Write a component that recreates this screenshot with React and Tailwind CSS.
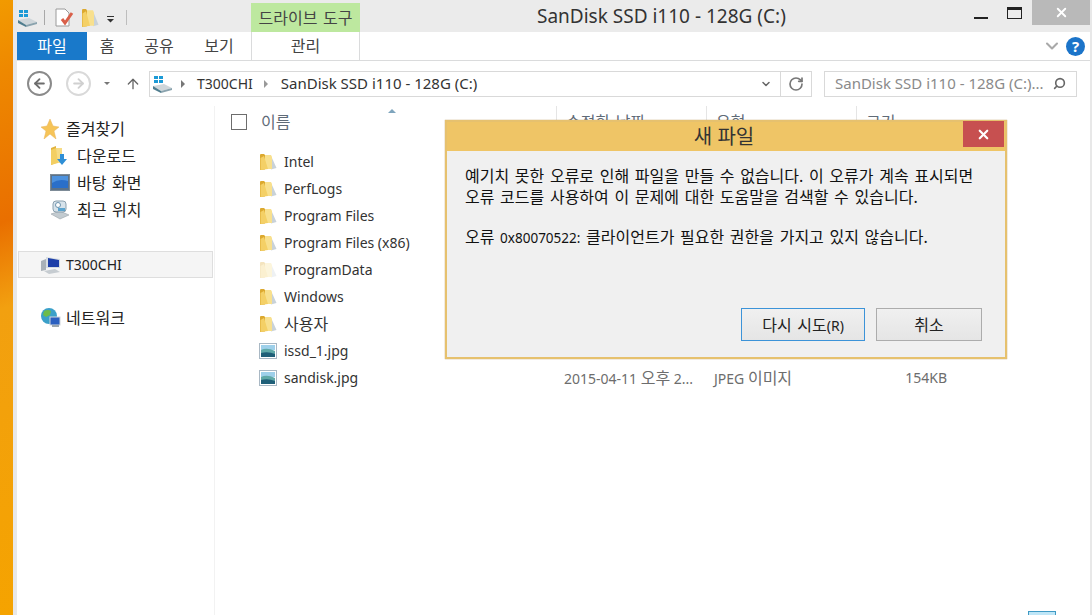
import { ArrowLeft, ArrowRight, ArrowUp, ChevronDown, RotateCw, Search, X } from 'lucide-react';

const FONT = "font-['Noto_Sans','Noto_Sans_CJK_KR',sans-serif]";
// Hangul in the reference runs wider than Latin at the same size
const KO = 'text-[16px] [word-spacing:1.5px]';

// Small hand-drawn explorer icons
function FolderIcon({ faded = false, tall = false }) {
  return (
    <svg width="18" height={tall ? 20 : 18} viewBox="0 0 18 18" preserveAspectRatio="none" className={faded ? 'opacity-30' : ''}>
      <path d="M13 5 L17.5 15 L12 16.5 Z" fill="#c9d2d8" />
      <path d="M6 2 L12 2 L13 4 L13 16 L6 16 Z" fill="#f8e08e" />
      <path d="M1 2 Q1 1 2 1 L5 1 L6 2 L6 16.5 L1 17 Z" fill="#dca92f" />
      <path d="M1.5 5 L5 3 L9 16 L1.5 17 Z" fill="#f4d066" />
    </svg>
  );
}

function ImageIcon() {
  return (
    <svg width="18" height="16" viewBox="0 0 18 16">
      <rect x="0.5" y="0.5" width="17" height="15" fill="#fff" stroke="#a9b8c4" />
      <rect x="2" y="2" width="14" height="5" fill="#9ed0ea" />
      <path d="M2 7 Q8 4 16 8 L16 14 L2 14 Z" fill="#5fa9a8" />
      <path d="M2 10 Q9 8 16 11 L16 14 L2 14 Z" fill="#1f5f78" />
    </svg>
  );
}

function DriveIcon() {
  return (
    <svg width="20" height="18" viewBox="0 0 20 18">
      <path d="M1 11 L12 9 L20 13 L9 16 Z" fill="#cfd6da" />
      <path d="M1 11 L9 16 L9 18 L1 14 Z" fill="#4f7d8e" />
      <path d="M9 16 L20 13 L20 15 L9 18 Z" fill="#8aa3ae" />
      <rect x="2" y="1" width="4" height="3" fill="#1c9ad6" />
      <rect x="7" y="1" width="4" height="3" fill="#1c9ad6" />
      <rect x="2" y="5" width="4" height="3" fill="#1c9ad6" />
      <rect x="7" y="5" width="4" height="3" fill="#1c9ad6" />
    </svg>
  );
}

function StarIcon() {
  return (
    <svg width="18" height="20" viewBox="0 0 18 20">
      <path d="M9 0 L12 7 L18 8 L13 12 L15 20 L9 15 L3 20 L5 12 L0 8 L6 7 Z" fill="#f6c458" stroke="#e6b25a" strokeWidth="0.5" />
    </svg>
  );
}

function DownloadIcon() {
  return (
    <svg width="18" height="20" viewBox="0 0 18 20">
      <path d="M1 2 L6 0 L6 17 L1 19 Z" fill="#e2b33c" />
      <path d="M6 2 L12 2 L12 17 L6 17 Z" fill="#f6dc86" />
      <path d="M1 4 L6 2 L8 17 L1 19 Z" fill="#f3cf63" />
      <path d="M10 8 L14 8 L14 13 L17 13 L12 19 L7 13 L10 13 Z" fill="#2f8fd6" />
    </svg>
  );
}

function DesktopIcon() {
  return (
    <svg width="20" height="17" viewBox="0 0 20 17">
      <rect x="0.5" y="0.5" width="19" height="16" fill="#5c7288" stroke="#7d8b97" />
      <rect x="2" y="2" width="16" height="12" fill="#2a6fc9" />
      <path d="M2 2 L18 2 L18 7 Q9 4 2 9 Z" fill="#4d92de" />
    </svg>
  );
}

function RecentIcon() {
  return (
    <svg width="20" height="20" viewBox="0 0 20 20">
      <path d="M1 14 L10 11 L19 15 L10 19 Z" fill="#c3cbd0" stroke="#8e989f" strokeWidth="0.5" />
      <rect x="3" y="1" width="13" height="11" rx="3" fill="#d6e2ea" stroke="#8ba0ae" />
      <circle cx="8" cy="5" r="2.5" fill="#fff" stroke="#6d93ad" />
      <rect x="8" y="8" width="7" height="3" fill="#5ba4cf" />
    </svg>
  );
}

function ComputerIcon() {
  return (
    <svg width="20" height="18" viewBox="0 0 20 18">
      <path d="M0 5 L5 3 L5 14 L0 15 Z" fill="#a9b1b8" />
      <path d="M5 1 L19 3 L19 12 L5 12 Z" fill="#d7dde2" />
      <path d="M7 2 L18 4 L18 11 L7 11 Z" fill="#1e3fa8" />
      <path d="M3 15 L14 13 L19 16 L8 18 Z" fill="#c6ccd1" />
    </svg>
  );
}

function NetworkIcon() {
  return (
    <svg width="20" height="20" viewBox="0 0 20 20">
      <circle cx="8" cy="8" r="8" fill="#3aa0c9" />
      <path d="M3 3 Q7 1 10 3 L9 7 L5 9 L2 7 Z" fill="#6cbb4a" />
      <path d="M9 10 L13 9 L12 14 L9 15 Z" fill="#6cbb4a" />
      <rect x="9" y="9" width="10" height="8" fill="#2a5fc0" stroke="#cfd6dc" />
      <rect x="11" y="17" width="7" height="2" fill="#9aa5ad" />
    </svg>
  );
}

function TitleIcons() {
  return (
    <div className="flex items-center pt-[3px]">
      <DriveIcon />
      <div className="ml-[7px] h-[15px] w-px bg-[#a8a8a8]" />
      <svg width="20" height="19" viewBox="0 0 20 19" className="ml-[10px]">
        <path d="M1 1 L10 1 L14 5 L14 18 L1 18 Z" fill="#fff" stroke="#9a9a9a" />
        <path d="M7 11 L10 15 L17 5" fill="none" stroke="#d9604a" strokeWidth="3" />
      </svg>
      <div className="ml-[6px]"><FolderIcon tall /></div>
      <svg width="8" height="8" viewBox="0 0 8 8" className="ml-[8px] mt-[3px]">
        <rect x="0" y="1" width="7" height="1" fill="#333" />
        <path d="M0 4 L7 4 L3.5 7.5 Z" fill="#333" />
      </svg>
      <div className="ml-[11px] h-[15px] w-px bg-[#bdbdbd]" />
    </div>
  );
}

function TitleBar() {
  return (
    <div className="flex h-[32px] bg-[#ebebeb]">
      <div className="flex w-[234px] items-center"><TitleIcons /></div>
      <div className={`mt-[3px] flex h-[29px] w-[109px] items-center justify-center bg-[#bde89f] text-[#444] ${KO}`}>
        드라이브 도구
      </div>
      <div className="w-[177px]" />
      <div className="w-[336px] pt-[3px] text-[19px] leading-[26px] whitespace-nowrap text-[#333]">
        SanDisk SSD i110 - 128G (C:)
      </div>
      <div className="flex flex-1 items-start justify-end">
        <div className="mt-[17px] mr-[19px] h-[2px] w-[14px] bg-[#222]" />
        <div className="mt-[7px] mr-[10px] h-[12px] w-[15px] border border-t-[3px] border-[#222]" />
        <div className="flex h-[25px] w-[58px] items-center justify-center bg-[#b9b9b9] text-white">
          <X size={15} strokeWidth={3} />
        </div>
      </div>
    </div>
  );
}

function RibbonTabs() {
  return (
    <div className={`flex h-[29px] items-stretch border-b border-[#dadbdc] bg-white text-[#444] ${KO}`}>
      <div className="flex w-[70px] items-center justify-center bg-[#1979ca] text-white">파일</div>
      <div className="flex w-[40px] items-center justify-center">홈</div>
      <div className="flex w-[64px] items-center justify-center">공유</div>
      <div className="flex w-[56px] items-center justify-center">보기</div>
      <div className="ml-[4px] flex w-[109px] items-center justify-center border-x border-[#dadbdc]">관리</div>
      <div className="flex flex-1 items-center justify-end pr-[5px]">
        <ChevronDown size={20} strokeWidth={2.5} className="mr-[4px] text-[#a9a9a9]" />
        <div className="flex h-[19px] w-[19px] items-center justify-center rounded-full bg-[#1b74c9] text-[15px] leading-none font-bold text-white">?</div>
      </div>
    </div>
  );
}

function AddressBar() {
  return (
    <div className="flex h-[45px] items-center text-[14px]">
      <div className="ml-[10px] flex h-[25px] w-[25px] items-center justify-center rounded-full border-2 border-[#8a8a8a] text-[#6d6d6d]">
        <ArrowLeft size={15} strokeWidth={3} />
      </div>
      <div className="ml-[14px] flex h-[25px] w-[25px] items-center justify-center rounded-full border-2 border-[#d9d9d9] text-[#d0d0d0]">
        <ArrowRight size={15} strokeWidth={3} />
      </div>
      <div className="ml-[13px] h-0 w-0 border-x-[3px] border-t-[3px] border-x-transparent border-t-[#777]" />
      <ArrowUp size={16} strokeWidth={2} className="ml-[15px] text-[#666]" />
      <div className="ml-[8px] flex h-[26px] w-[663px] items-center border border-[#d9d9d9] pl-[2px]">
        <DriveIcon />
        <div className="ml-[9px] h-0 w-0 border-y-[4px] border-l-[4px] border-y-transparent border-l-[#777]" />
        <span className="ml-[12px] text-[#333]">T300CHI</span>
        <div className="ml-[11px] h-0 w-0 border-y-[4px] border-l-[4px] border-y-transparent border-l-[#999]" />
        <span className="ml-[13px] text-[15px] whitespace-nowrap text-[#333]">SanDisk SSD i110 - 128G (C:)</span>
        <div className="flex-1" />
        <ChevronDown size={12} strokeWidth={3} className="mr-[8px] text-[#666]" />
        <div className="flex h-full w-[31px] items-center justify-center border-l border-[#d9d9d9]">
          <RotateCw size={16} strokeWidth={2.5} className="text-[#777]" />
        </div>
      </div>
      <div className="ml-[12px] flex h-[26px] w-[253px] items-center justify-between border border-[#d9d9d9] px-[10px] text-[15px] text-[#8a8a8a]">
        <span className="whitespace-nowrap">SanDisk SSD i110 - 128G (C:)...</span>
        <Search size={13} strokeWidth={3} className="scale-x-[-1] text-[#666]" />
      </div>
    </div>
  );
}

function NavItem({ icon, label, indent = false }) {
  return (
    <div className={`flex h-[27px] items-center ${indent ? 'pl-[33px]' : 'pl-[24px]'}`}>
      <div className={indent ? 'w-[27px]' : 'w-[25px]'}>{icon}</div>
      <span className={KO}>{label}</span>
    </div>
  );
}

function Sidebar() {
  return (
    <div className="w-[198px] shrink-0 border-r border-[#f2f2f2] pt-[9px] text-[14px] text-[#222]">
      <NavItem icon={<StarIcon />} label="즐겨찾기" />
      <NavItem indent icon={<DownloadIcon />} label="다운로드" />
      <NavItem indent icon={<DesktopIcon />} label="바탕 화면" />
      <NavItem indent icon={<RecentIcon />} label="최근 위치" />
      <div className="mt-[28px] ml-[1px] flex h-[27px] w-[195px] items-center border border-[#dedede] bg-[#f5f5f5] pl-[22px]">
        <div className="w-[25px]"><ComputerIcon /></div>
        <span>T300CHI</span>
      </div>
      <div className="mt-[26px]">
        <NavItem icon={<NetworkIcon />} label="네트워크" />
      </div>
    </div>
  );
}

const files = [
  { name: 'Intel' },
  { name: 'PerfLogs' },
  { name: 'Program Files' },
  { name: 'Program Files (x86)' },
  { name: 'ProgramData', faded: true },
  { name: 'Windows' },
  { name: '사용자', ko: true },
  { name: 'issd_1.jpg', image: true },
  { name: 'sandisk.jpg', image: true, date: '2015-04-11', time: '오후', more: '2...', type: 'JPEG', typeKo: '이미지', size: '154KB' },
];

function FileList() {
  return (
    <div className="flex-1 text-[14px]">
      <div className="flex h-[40px] items-stretch text-[#5f6b78]">
        <div className="relative flex w-[341px] items-start pt-[8px] pl-[16px]">
          <div className="h-[16px] w-[16px] border border-[#6d6d6d]" />
          <span className={`ml-[14px] leading-[16px] ${KO}`}>이름</span>
          <div className="absolute top-[3px] left-[173px] h-0 w-0 border-x-[4px] border-b-[4px] border-x-transparent border-b-[#7fa5bd]" />
        </div>
        <div className={`w-[150px] border-l border-[#e5e5e5] pt-[4px] pl-[9px] whitespace-nowrap ${KO}`}>수정한 날짜</div>
        <div className={`w-[150px] border-l border-[#e5e5e5] pt-[4px] pl-[9px] ${KO}`}>유형</div>
        <div className={`w-[100px] border-l border-[#e5e5e5] pt-[4px] pl-[9px] ${KO}`}>크기</div>
      </div>
      <div className="mt-[2px]">
        {files.map((f) => (
          <div key={f.name} className="flex h-[27px] items-center">
            <div className="flex w-[69px] justify-end pr-[7px]">
              {f.image ? <ImageIcon /> : <FolderIcon faded={f.faded} />}
            </div>
            <span className={`w-[280px] whitespace-nowrap text-[#333] ${f.ko ? KO : ''}`}>{f.name}</span>
            <span className="w-[150px] whitespace-nowrap text-[#6d6d6d]">
              {f.date && <>{f.date} <span className={KO}>{f.time}</span> {f.more}</>}
            </span>
            <span className="w-[143px] whitespace-nowrap text-[#6d6d6d]">
              {f.type && <>{f.type} <span className={KO}>{f.typeKo}</span></>}
            </span>
            <span className="w-[90px] text-right text-[#6d6d6d]">{f.size}</span>
          </div>
        ))}
      </div>
    </div>
  );
}

function ErrorDialog() {
  return (
    <div className="absolute top-[120px] left-[445px] flex h-[239px] w-[562px] flex-col border-2 border-[#e6c16e] bg-[#f0f0f0] shadow-[0_0_1px_#b08a40]">
      <div className="relative flex h-[29px] shrink-0 items-center justify-center bg-[#efc566] pr-[4px] text-[20px] text-[#333]">
        새 파일
        <div className="absolute top-[-1px] right-[1px] flex h-[26px] w-[41px] items-center justify-center bg-[#c75050] text-white">
          <X size={15} strokeWidth={3.5} />
        </div>
      </div>
      <div className={`flex-1 px-[18px] pt-[15px] leading-[21px] whitespace-nowrap text-[#111] ${KO}`}>
        <div>예기치 못한 오류로 인해 파일을 만들 수 없습니다. 이 오류가 계속 표시되면</div>
        <div>오류 코드를 사용하여 이 문제에 대한 도움말을 검색할 수 있습니다.</div>
        <div className="mt-[19px]">오류 <span className="text-[13.5px]">0x80070522:</span> 클라이언트가 필요한 권한을 가지고 있지 않습니다.</div>
      </div>
      <div className="flex justify-end gap-[11px] pr-[23px] pb-[16px] text-[#222]">
        <button className={`h-[33px] w-[124px] border border-[#3c93d8] bg-gradient-to-b from-[#f0f0f0] to-[#e5e5e5] ${KO}`}>다시 시도<span className="text-[14px]">(R)</span></button>
        <button className={`h-[33px] w-[106px] border border-[#acacac] bg-gradient-to-b from-[#f0f0f0] to-[#e5e5e5] ${KO}`}>취소</button>
      </div>
    </div>
  );
}

export default function App() {
  return (
    <div className={`relative flex h-[615px] w-[1092px] overflow-hidden bg-white ${FONT}`}>
      {/* desktop wallpaper showing left of the window */}
      <div className="w-[13px] shrink-0 bg-[linear-gradient(160deg,#f29a00_0%,#ee8800_12%,#e96f00_36%,#f2a010_50%,#f5a300_100%)]" />
      <div className="flex flex-1 flex-col border-r-2 border-l-4 border-[#e8e8e8]">
        <TitleBar />
        <RibbonTabs />
        <AddressBar />
        <div className="flex flex-1">
          <Sidebar />
          <FileList />
        </div>
      </div>
      <ErrorDialog />
      {/* view toggle, cut off by the bottom of the picture */}
      <div className="absolute top-[611px] left-[1028px] h-[6px] w-[28px] border border-[#3f9ac4] bg-[#bfe6f7]" />
    </div>
  );
}
